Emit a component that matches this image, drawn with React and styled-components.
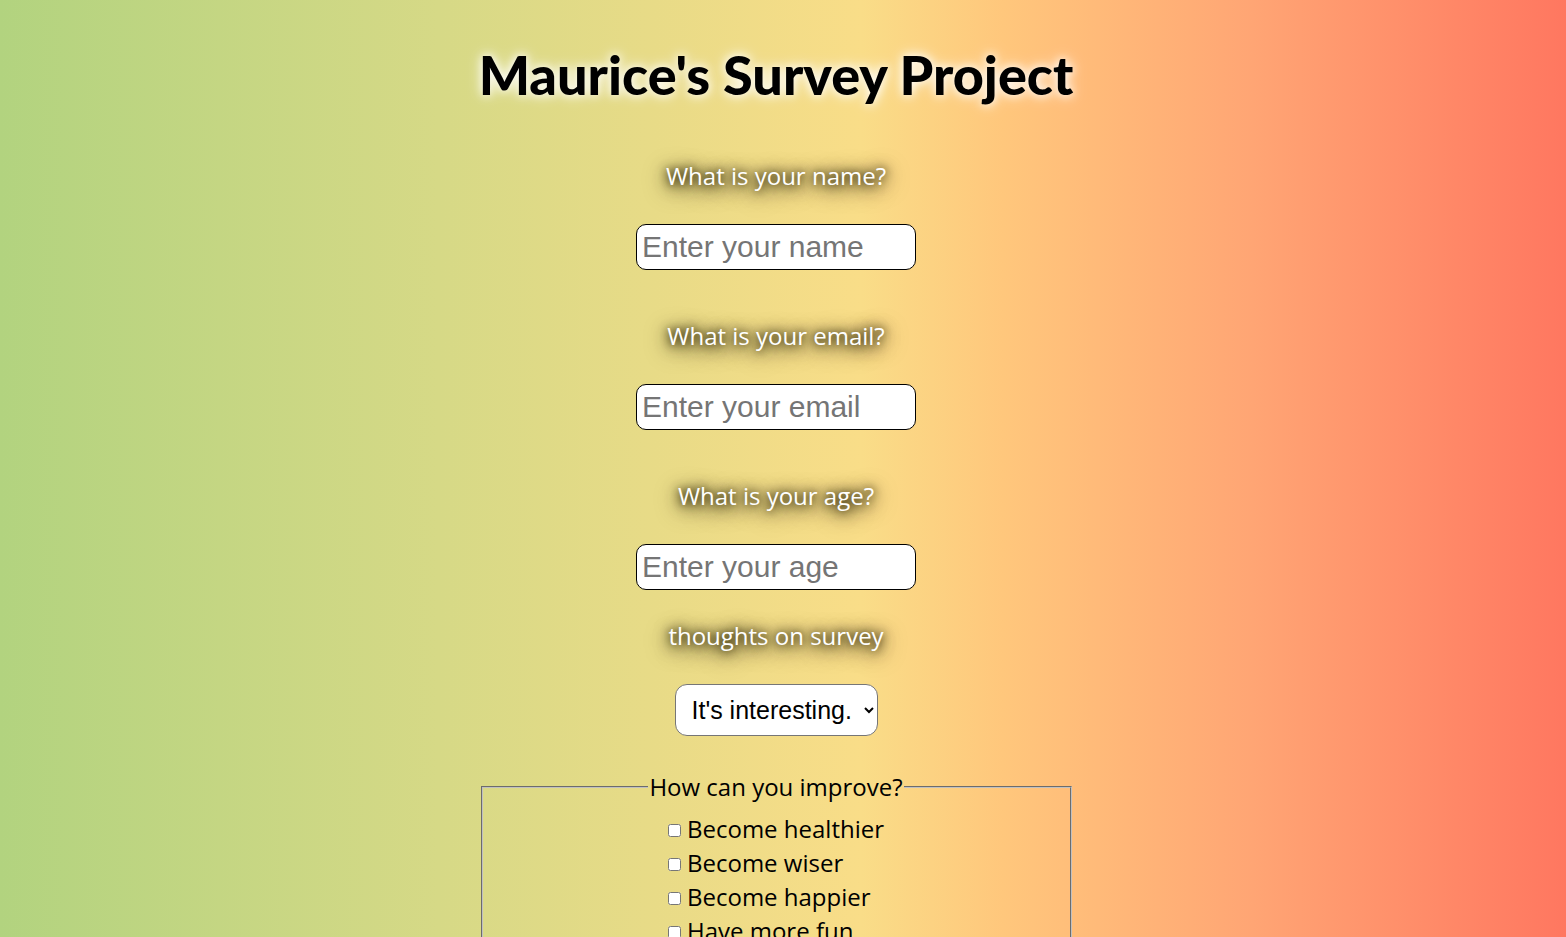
import React from "react";
import styled, { createGlobalStyle } from "styled-components";

const GlobalStyle = createGlobalStyle`
  html, body {
    margin: 0;
    padding: 0;
  }
  body {
    min-height: 100vh;
    background: linear-gradient(to right, #b2d37f 0%, #d6d986 28%, #f9dd88 55%, #ffc77c 64%, #ffa574 80%, #ff7760 100%);
    font-family: "Open Sans", "DejaVu Sans", sans-serif;
  }
`;

const Page = styled.main`
  display: flex;
  flex-direction: column;
  align-items: center;
  padding: 41px 14px 0 0;
`;

const Title = styled.h1`
  margin: 0;
  font-family: Lato, "Open Sans", sans-serif;
  font-weight: 900;
  font-size: 54px;
  line-height: 68px;
  color: #000;
  text-shadow: 0 0 10px #fff, 0 0 16px rgba(255, 255, 255, 0.8);
`;

const Form = styled.form`
  display: flex;
  flex-direction: column;
  align-items: center;
  margin-top: 51px;
`;

const Question = styled.label`
  display: block;
  font-family: "Open Sans", sans-serif;
  font-size: 24px;
  line-height: 32px;
  color: #fff;
  text-shadow: 0 0 8px rgba(40, 32, 0, 1), 0 2px 16px rgba(40, 32, 0, 1), 0 4px 24px rgba(40, 32, 0, 0.8);
  margin-top: ${(p) => p.$gap || 0}px;
  margin-bottom: 32px;
`;

const TextInput = styled.input`
  box-sizing: border-box;
  width: 280px;
  height: 46px;
  border: 1px solid #000;
  border-radius: 10px;
  background: #fff;
  padding: 0 5px;
  font-family: "Liberation Sans", Arial, sans-serif;
  font-size: 30px;
  color: #000;
  outline: none;
  &::placeholder {
    color: #757575;
  }
`;

const Select = styled.select`
  box-sizing: border-box;
  width: 203px;
  height: 52px;
  border: 1px solid #767676;
  border-radius: 12px;
  background: #fff;
  padding: 0 6px 0 12px;
  font-family: "Liberation Sans", Arial, sans-serif;
  font-size: 25px;
  color: #000;
`;

const Fieldset = styled.fieldset`
  box-sizing: border-box;
  width: 591px;
  margin: 37px 0 0;
  padding: 0 0 20px;
  border: 2px groove #c0c0c0;
  display: flex;
  flex-direction: column;
  align-items: center;
`;

const Legend = styled.legend`
  font-family: "Open Sans", sans-serif;
  font-size: 24px;
  line-height: 28px;
  color: #000;
  padding: 0 1px;
  margin: 0 auto;
`;

const Options = styled.div`
  display: flex;
  flex-direction: column;
  align-items: flex-start;
  margin-top: 11px;
`;

const Option = styled.label`
  display: flex;
  align-items: center;
  font-family: "Open Sans", sans-serif;
  font-size: 24px;
  line-height: 34px;
  color: #000;
`;

const Checkbox = styled.input`
  width: 13px;
  height: 13px;
  margin: 2px 6px 0 0;
`;

const improvements = ["Become healthier", "Become wiser", "Become happier", "Have more fun"];

export default function App() {
  return (
    <>
      <GlobalStyle />
      <Page>
        <Title>Maurice's Survey Project</Title>
        <Form>
          <Question htmlFor="name">What is your name?</Question>
          <TextInput id="name" type="text" placeholder="Enter your name" />
          <Question htmlFor="email" $gap={50}>What is your email?</Question>
          <TextInput id="email" type="email" placeholder="Enter your email" />
          <Question htmlFor="age" $gap={50}>What is your age?</Question>
          <TextInput id="age" type="number" placeholder="Enter your age" />
          <Question htmlFor="thoughts" $gap={30}>thoughts on survey</Question>
          <Select id="thoughts" defaultValue="interesting">
            <option value="interesting">It's interesting.</option>
            <option value="boring">It's boring.</option>
            <option value="okay">It's okay.</option>
          </Select>
          <Fieldset>
            <Legend>How can you improve?</Legend>
            <Options>
              {improvements.map((item) => (
                <Option key={item}>
                  <Checkbox type="checkbox" value={item} />
                  {item}
                </Option>
              ))}
            </Options>
          </Fieldset>
        </Form>
      </Page>
    </>
  );
}
